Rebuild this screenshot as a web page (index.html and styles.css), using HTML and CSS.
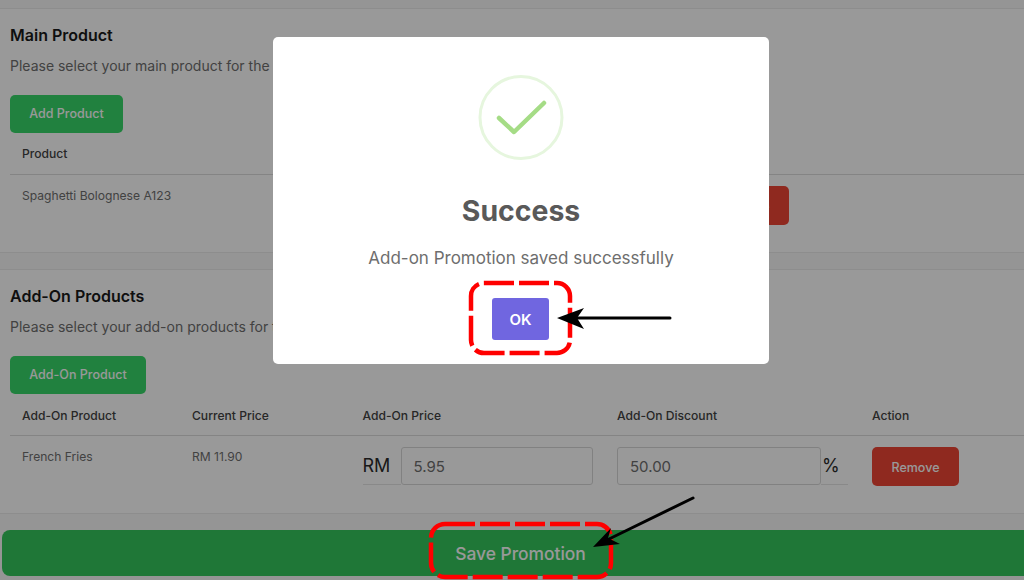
FILE: index.html
```html
<!DOCTYPE html>
<html lang="en">
<head>
<meta charset="utf-8">
<title>Add-on Promotion</title>
<link rel="stylesheet" href="styles.css">
</head>
<body>
<main class="page">
  <section class="card card-main">
    <h3 class="card-title">Main Product</h3>
    <p class="card-desc">Please select your main product for the promotion</p>
    <button class="btn btn-green btn-main">Add Product</button>
    <div class="row row-head grid-main">
      <span>Product</span>
      <span>Action</span>
    </div>
    <div class="row row-body grid-main">
      <span>Spaghetti Bolognese A123</span>
      <button class="btn btn-red">Remove</button>
    </div>
  </section>

  <section class="card card-addon">
    <h3 class="card-title">Add-On Products</h3>
    <p class="card-desc">Please select your add-on products for the promotion</p>
    <button class="btn btn-green btn-addon">Add-On Product</button>
    <div class="row row-head grid-addon">
      <span>Add-On Product</span>
      <span>Current Price</span>
      <span>Add-On Price</span>
      <span>Add-On Discount</span>
      <span>Action</span>
    </div>
    <div class="row row-body grid-addon">
      <span>French Fries</span>
      <span>RM 11.90</span>
      <div class="input-group">
        <span class="affix affix-rm">RM</span>
        <input class="field field-price" value="5.95">
      </div>
      <div class="input-group">
        <input class="field field-discount" value="50.00">
        <span class="affix affix-pct">%</span>
      </div>
      <button class="btn btn-red">Remove</button>
    </div>
  </section>

  <button class="btn-save">Save Promotion</button>
</main>

<div class="overlay">
  <div class="modal">
    <svg class="success-icon" width="88" height="88" viewBox="0 0 88 88" aria-hidden="true">
      <circle cx="44" cy="43.5" r="41" fill="none" stroke="#e6f6de" stroke-width="3"/>
      <path d="M22 44 L37 58 L67 29" fill="none" stroke="#a5dc86" stroke-width="4.5" stroke-linecap="round" stroke-linejoin="round"/>
    </svg>
    <h2 class="modal-title">Success</h2>
    <p class="modal-text">Add-on Promotion saved successfully</p>
    <button class="btn-ok">OK</button>
  </div>
</div>

<svg class="annotations" width="1024" height="580" viewBox="0 0 1024 580" aria-hidden="true">
  <rect x="471" y="283" width="99" height="70" rx="13" fill="none" stroke="#ff0000" stroke-width="4.5" stroke-dasharray="30 5"/>
  <rect x="431" y="524" width="180" height="53" rx="14" fill="none" stroke="#ff0000" stroke-width="4.5" stroke-dasharray="30 5"/>
  <path d="M670 318 H575" stroke="#000" stroke-width="3" stroke-linecap="round"/>
  <path d="M557 318 L584 308 L577 318 L584 329 Z" fill="#000"/>
  <path d="M693 498 L607 540" stroke="#000" stroke-width="3" stroke-linecap="round"/>
  <path d="M593 547 L611 528 L608 538 L620 544 Z" fill="#000"/>
</svg>
</body>
</html>
```
FILE: styles.css
```css
* { box-sizing: border-box; }

html, body {
  margin: 0;
  height: 580px;
  overflow: hidden;
}

body {
  position: relative;
  background: #f8f8f8;
  font-family: Inter, "Liberation Sans", sans-serif;
  color: #6b6b6b;
}

.page {
  padding-top: 8px;
  display: flex;
  flex-direction: column;
}

.card {
  background: #ffffff;
  border-top: 1px solid #ececec;
  border-bottom: 1px solid #ececec;
  padding-left: 10px;
}

.card-main { height: 245px; padding-top: 16px; }
.card-addon { height: 245px; margin-top: 16px; padding-top: 16px; }

.card-title {
  margin: 0;
  font-size: 16px;
  line-height: 20px;
  font-weight: 600;
  color: #1a1a1a;
}

.card-desc {
  margin: 11px 0 19px;
  font-size: 14px;
  line-height: 20px;
  color: #6e6e6e;
}

.btn {
  border: 0;
  font-family: inherit;
  font-size: 12.5px;
  font-weight: 500;
  color: #ffffff;
  cursor: pointer;
}

.btn-green {
  display: block;
  height: 38px;
  padding-bottom: 3px;
  border-radius: 5px;
  background: #38d869;
}

.btn-main { width: 113px; }
.btn-addon { width: 136px; }

.btn-red {
  width: 87px;
  height: 39px;
  padding-top: 2px;
  border-radius: 5px;
  background: #ee4535;
}

.row {
  display: grid;
  padding-left: 12px;
  font-size: 12.1px;
}

.grid-main { grid-template-columns: 680px 1fr; }
.grid-addon { grid-template-columns: 170px 170.5px 254.5px 255px 1fr; }

.row-head {
  height: 42px;
  align-items: center;
  border-bottom: 1px solid #dcdcdc;
  font-weight: 500;
  color: #424242;
}

.row-head.grid-main { padding-top: 0.5px; }
.row-head.grid-addon { padding-top: 1px; }

.row-body {
  padding-top: 11px;
  line-height: 20px;
  color: #6e6e6e;
}

.input-group {
  display: flex;
  align-items: stretch;
  height: 38px;
  margin-right: 24px;
}

.field {
  border: 1px solid #d8d8d8;
  border-radius: 3px;
  background: #ffffff;
  font-family: inherit;
  font-size: 15px;
  color: #6e6e6e;
  padding: 0 12px;
  height: 38px;
}

.field-price { width: 192.5px; }
.field-discount { width: 204px; }

.affix {
  display: flex;
  align-items: center;
  border-bottom: 1px solid #e4e4e4;
  color: #2b2b2b;
  font-size: 18px;
}

.affix-rm { width: 40px; }
.affix-pct { width: 28px; padding-left: 1px; }

.btn-save {
  display: block;
  height: 46px;
  margin: 16px 0 0 2px;
  border: 0;
  border-radius: 8px 0 0 8px;
  background: #34c75c;
  color: #ffffff;
  font-family: inherit;
  font-size: 17.4px;
  font-weight: 500;
  padding: 0 0 0 15px;
}

.overlay {
  position: absolute;
  inset: 0;
  display: flex;
  justify-content: center;
  align-items: flex-start;
  padding: 37px 0 0 18px;
  background: rgba(0, 0, 0, 0.4);
}

.modal {
  width: 496px;
  height: 327px;
  display: flex;
  flex-direction: column;
  align-items: center;
  padding-top: 37px;
  border-radius: 5px;
  background: #ffffff;
}

.success-icon { display: block; }

.modal-title {
  margin: 31px 0 0;
  font-size: 28.4px;
  line-height: 36px;
  font-weight: 700;
  color: #595959;
}

.modal-text {
  margin: 17px 0 0;
  font-size: 17px;
  line-height: 24px;
  color: #6e6e6e;
}

.btn-ok {
  width: 57px;
  height: 42px;
  margin: 28px 1px 0 0;
  border: 0;
  border-radius: 3px;
  background: #7066e0;
  color: #ffffff;
  font-family: inherit;
  font-size: 15px;
  font-weight: 600;
}

.annotations {
  position: absolute;
  inset: 0;
  pointer-events: none;
}
```
